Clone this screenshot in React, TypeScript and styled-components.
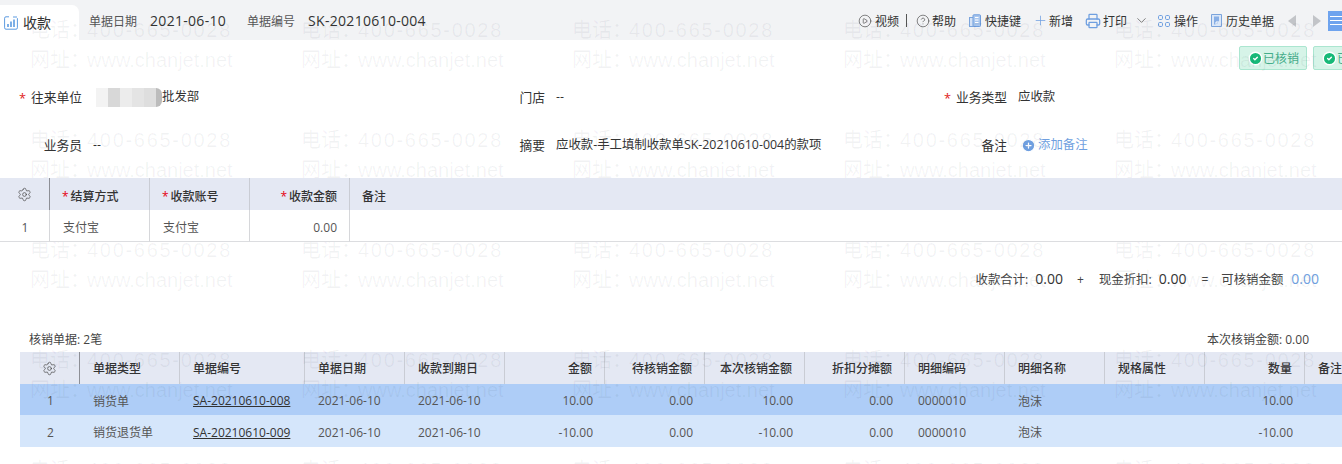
import React from "react";
import styled, { createGlobalStyle } from "styled-components";
import { CirclePlay, CircleHelp, Plus, Printer, ChevronDown, Settings, CircleCheck, CirclePlus } from "lucide-react";

const FONT = `"Open Sans", "Noto Sans CJK SC", "Noto Sans", sans-serif`;

const Global = createGlobalStyle`
  html, body { margin: 0; padding: 0; background: #fff; }
  body { font-family: ${FONT}; font-size: 12px; color: #333; }
  * { box-sizing: border-box; }
`;

const Page = styled.div`
  position: relative;
  width: 1342px;
  height: 464px;
  overflow: hidden;
  background: #fff;
`;

const Watermark = styled.div`
  position: absolute;
  inset: 0;
  z-index: 1;
  padding-left: 30px;
  display: grid;
  grid-template-columns: repeat(5, 271px);
  grid-auto-rows: 110px;
  pointer-events: none;
`;

const MarkTile = styled.div`
  padding-top: 15px;
  font-family: "Liberation Sans", "Noto Sans CJK SC", sans-serif;
  font-size: 20px;
  line-height: 30px;
  color: rgba(40, 50, 70, 0.06);
  white-space: nowrap;
`;

const MarkLine = styled.div`
  display: flex;
`;

const MarkKey = styled.span`
  width: 57px;
`;

const MarkDigits = styled.span`
  letter-spacing: 1.7px;
`;

const Header = styled.header`
  height: 40px;
  background: #f2f3f5;
  display: flex;
  align-items: flex-end;
`;

const Tab = styled.div`
  width: 79px;
  height: 35px;
  background: #fff;
  border-top-right-radius: 7px;
  display: flex;
  align-items: center;
  padding-left: 4px;
  gap: 5px;
  font-size: 14px;
  line-height: 20px;
  color: #333;
`;

const Meta = styled.div`
  height: 40px;
  display: flex;
  align-items: center;
  margin-left: 10px;
  padding-top: 1px;
  white-space: nowrap;
`;

const MetaLabel = styled.span`
  font-size: 12px;
  color: #555;
  margin-right: 13px;
`;

const MetaValue = styled.span`
  font-size: 14px;
  letter-spacing: 0.3px;
  color: #333;
  margin-right: 21px;
`;

const Toolbar = styled.div`
  height: 40px;
  margin-left: auto;
  display: flex;
  align-items: center;
  padding-top: 1px;
  white-space: nowrap;
`;

const Tool = styled.span<{ $gap?: number; $after?: number }>`
  display: inline-flex;
  align-items: center;
  gap: ${(p) => p.$gap ?? 4}px;
  margin-right: ${(p) => p.$after ?? 13}px;
  font-size: 12px;
  color: #333;
  svg { flex: none; }
`;

const ToolDivider = styled.span`
  width: 1px;
  height: 13px;
  background: #555;
  margin-right: 9px;
`;

const MenuButton = styled.span`
  width: 14px;
  height: 20px;
  margin-left: 7px;
  background: #6ea3ee;
  display: inline-flex;
  flex-direction: column;
  justify-content: center;
  gap: 3px;
  padding-left: 2px;
`;

const MenuLine = styled.span`
  display: block;
  width: 14px;
  height: 1px;
  background: #fff;
`;

const StatusRow = styled.div`
  height: 33px;
  padding: 6px 0 0 1239px;
  display: flex;
  gap: 6px;
  white-space: nowrap;
`;

const StatusTag = styled.span`
  flex: none;
  width: 68px;
  height: 24px;
  display: inline-flex;
  align-items: center;
  padding-left: 8px;
  background: #d6f4e8;
  border: 1px solid #abe6d0;
  border-radius: 2px;
  font-size: 12px;
  color: #46ae8b;
`;

const FormRow = styled.div`
  display: grid;
  grid-template-columns: 463px 462px 417px;
  height: 48px;
  align-items: center;
`;

const Field = styled.div`
  display: flex;
  align-items: center;
  white-space: nowrap;
  font-size: 12.4px;
  line-height: 18px;
`;

const FieldLabel = styled.span`
  width: 82px;
  font-size: 12.75px;
  text-align: right;
  color: #333;
  margin-right: 11px;
  position: relative;
`;

const Star = styled.i`
  position: absolute;
  font-style: normal;
  color: #e02020;
  right: 56px;
  top: 1px;
`;

const Redacted = styled.span`
  display: inline-block;
  width: 66px;
  height: 19px;
  margin-left: 3px;
  border-radius: 0 6px 6px 0;
  background: linear-gradient(
    90deg,
    #f3f3f3 0 12px,
    #d8d8d8 12px 24px,
    #ececec 24px 36px,
    #e4e4e4 36px 48px,
    #dedede 48px 60px,
    #bcbcbc 60px 66px
  );
`;

const Link = styled.span`
  display: inline-flex;
  align-items: center;
  gap: 2px;
  color: #6f9fe0;
  margin-left: 3px;
`;

const Spacer = styled.div`
  height: 9px;
`;

const Table = styled.table<{ $over?: boolean; $width: number }>`
  display: table;
  width: ${(p) => p.$width}px;
  border-collapse: separate;
  border-spacing: 0;
  table-layout: fixed;
  position: relative;
  z-index: ${(p) => (p.$over ? 2 : 0)};
  font-size: 12px;
`;

const SalesWrap = styled.div`
  padding-left: 20px;
`;

const HeadCell = styled.th<{ $right?: boolean; $dark?: boolean; $drop?: number }>`
  height: 32px;
  padding: ${(p) => p.$drop ?? 0}px 12px 0 ${(p) => (p.$drop ? 12 : 13)}px;
  background: #e4e8f3;
  font-weight: 500;
  color: #333;
  text-align: ${(p) => (p.$right ? "right" : "left")};
  border-right: 1px solid ${(p) => (p.$dark ? "#8d8f96" : "#c9ccd4")};
  white-space: nowrap;
  overflow: hidden;
  &:last-child { border-right: 0; }
`;

const GearCell = styled(HeadCell)`
  padding: 0;
  svg { display: block; margin: 0 auto; }
`;

const Req = styled.span`
  color: #e6000f;
  margin-right: 2px;
`;

const Row = styled.tr<{ $bg?: string; $h: number }>`
  height: ${(p) => p.$h}px;
  background: ${(p) => p.$bg ?? "#fff"};
`;

const Cell = styled.td<{ $right?: boolean; $center?: boolean }>`
  padding: 3px 12px 0 13px;
  color: #555;
  text-align: ${(p) => (p.$right ? "right" : p.$center ? "center" : "left")};
  border-bottom: 1px solid #dcdde0;
  white-space: nowrap;
  overflow: hidden;
`;

const LinedCell = styled(Cell)`
  border-right: 1px solid #d6d7da;
`;

const SalesCell = styled(Cell)`
  border-bottom-color: transparent;
`;

const DocLink = styled.span`
  color: #333;
  text-decoration: underline;
`;

const Summary = styled.div`
  height: 76px;
  padding: 28px 23px 0 0;
  display: flex;
  justify-content: flex-end;
  align-items: flex-start;
  line-height: 20px;
  white-space: nowrap;
`;

const SumLabel = styled.span`
  font-size: 12.4px;
  color: #444;
`;

const SumValue = styled.span<{ $blue?: boolean; $left: number; $right: number }>`
  font-size: 14px;
  margin: -1px ${(p) => p.$right}px 0 ${(p) => p.$left}px;
  color: ${(p) => (p.$blue ? "#6f9fe0" : "#333")};
`;

const SumOp = styled.span<{ $right: number }>`
  font-size: 12px;
  color: #444;
  margin-right: ${(p) => p.$right}px;
`;

const SalesMeta = styled.div`
  height: 34px;
  padding: 13px 33px 0 29px;
  display: flex;
  justify-content: space-between;
  font-size: 12px;
  line-height: 18px;
  color: #444;
`;

const TabIcon = () => (
  <svg width="14" height="14" viewBox="0 0 14 14" fill="none" stroke="#5d9be0" strokeWidth="1">
    <path d="M5 .8H2A1.4 1.4 0 0 0 .6 2.2v9.6A1.4 1.4 0 0 0 2 13.2h10a1.4 1.4 0 0 0 1.4-1.4V2.2" />
    <path d="M4 11V8M7 11V5.5M10 11V3.5" strokeWidth="1.6" />
    <path d="M9 1h4" />
  </svg>
);

const ShortcutIcon = () => (
  <svg width="12" height="14" viewBox="0 0 12 14" fill="none">
    <rect x="0.5" y="3.5" width="4.5" height="9" fill="#d4e2f6" stroke="#7ba4dc" />
    <rect x="4" y="0.8" width="7.5" height="11.7" rx="0.8" fill="#a9c6ee" stroke="#6e9ddd" />
    <path d="M6 3.5h3.5M6 6h3.5M6 8.5h3.5" stroke="#fff" />
  </svg>
);

const OpsIcon = () => (
  <svg width="12" height="12" viewBox="0 0 12 12" fill="none" stroke="#6f9fe0" strokeWidth="1">
    <rect x="0.5" y="0.5" width="4" height="4" rx="1.2" />
    <rect x="7.5" y="0.5" width="4" height="4" rx="1.2" />
    <rect x="0.5" y="7.5" width="4" height="4" rx="1.2" />
    <rect x="7.5" y="7.5" width="4" height="4" rx="1.2" />
  </svg>
);

const HistoryIcon = () => (
  <svg width="11" height="13" viewBox="0 0 11 13" fill="none">
    <path d="M.5.5h10v12H.5z" fill="#dbe7f8" stroke="#7ba4dc" />
    <path d="M3 2.5h5v5.5l-3 2.5H3z" fill="#88afe6" />
    <path d="M5 10.5V8h3" stroke="#fff" />
  </svg>
);

const ArrowIcon = styled.svg<{ $after: number }>`
  margin-right: ${(p) => p.$after}px;
`;

const Arrow = ({ dir, after }: { dir: "l" | "r"; after: number }) => (
  <ArrowIcon $after={after} width="8" height="12" viewBox="0 0 8 12">
    <path d={dir === "l" ? "M8 0v12L0 6z" : "M0 0v12l8-6z"} fill="#c2c4c8" />
  </ArrowIcon>
);

const paymentCols = [50, 100, 100, 100, 992];
const salesCols = [60, 100, 125, 100, 100, 100, 100, 100, 100, 100, 100, 100, 100, 37];
const salesHead: [string, boolean][] = [
  ["单据类型", false], ["单据编号", false], ["单据日期", false], ["收款到期日", false],
  ["金额", true], ["待核销金额", true], ["本次核销金额", true], ["折扣分摊额", true],
  ["明细编码", false], ["明细名称", false], ["规格属性", false], ["数量", true], ["备注", false],
];
const salesRows = [
  { n: "1", type: "销货单", no: "SA-20210610-008", amt: "10.00", cur: "10.00", qty: "10.00", bg: "#aecdf7", h: 31 },
  { n: "2", type: "销货退货单", no: "SA-20210610-009", amt: "-10.00", cur: "-10.00", qty: "-10.00", bg: "#d5e6fb", h: 32 },
];

export default function App() {
  return (
    <Page>
      <Global />
      <Watermark aria-hidden>
        {Array.from({ length: 25 }, (_, i) => (
          <MarkTile key={i}>
            <MarkLine><MarkKey>电话：</MarkKey><MarkDigits>400-665-0028</MarkDigits></MarkLine>
            <MarkLine><MarkKey>网址：</MarkKey>www.chanjet.net</MarkLine>
          </MarkTile>
        ))}
      </Watermark>

      <Header>
        <Tab>
          <TabIcon />
          收款
        </Tab>
        <Meta>
          <MetaLabel>单据日期</MetaLabel>
          <MetaValue>2021-06-10</MetaValue>
          <MetaLabel>单据编号</MetaLabel>
          <MetaValue>SK-20210610-004</MetaValue>
        </Meta>
        <Toolbar>
          <Tool $gap={3} $after={7}><CirclePlay size={14} strokeWidth={1.1} color="#444" />视频</Tool>
          <ToolDivider />
          <Tool $gap={2} $after={13}><CircleHelp size={14} strokeWidth={1.1} color="#444" />帮助</Tool>
          <Tool $after={12}><ShortcutIcon />快捷键</Tool>
          <Tool $gap={1} $after={12}><Plus size={15} strokeWidth={1.2} color="#6f9fe0" />新增</Tool>
          <Tool $gap={2} $after={7}><Printer size={16} strokeWidth={1.9} color="#6f9fe0" />打印</Tool>
          <Tool $after={9}><ChevronDown size={15} strokeWidth={1.2} color="#555" /></Tool>
          <Tool $after={13}><OpsIcon />操作</Tool>
          <Tool $after={14}><HistoryIcon />历史单据</Tool>
          <Arrow dir="l" after={17} />
          <Arrow dir="r" after={0} />
          <MenuButton><MenuLine /><MenuLine /><MenuLine /></MenuButton>
        </Toolbar>
      </Header>

      <StatusRow>
        <StatusTag><CircleCheck size={15} fill="#17b978" color="#fff" strokeWidth={2.2} />已核销</StatusTag>
        <StatusTag><CircleCheck size={15} fill="#17b978" color="#fff" strokeWidth={2.2} />已核销</StatusTag>
      </StatusRow>

      <FormRow>
        <Field>
          <FieldLabel><Star>*</Star>往来单位</FieldLabel>
          <Redacted />批发部
        </Field>
        <Field><FieldLabel>门店</FieldLabel>--</Field>
        <Field><FieldLabel><Star>*</Star>业务类型</FieldLabel>应收款</Field>
      </FormRow>
      <FormRow>
        <Field><FieldLabel>业务员</FieldLabel>--</Field>
        <Field><FieldLabel>摘要</FieldLabel>应收款-手工填制收款单SK-20210610-004的款项</Field>
        <Field>
          <FieldLabel>备注</FieldLabel>
          <Link><CirclePlus size={15} fill="#6f9fe0" color="#fff" strokeWidth={2} />添加备注</Link>
        </Field>
      </FormRow>

      <Spacer />

      <Table $over $width={1342}>
        <colgroup>
          {paymentCols.map((w, i) => <col key={i} width={w} />)}
        </colgroup>
        <thead>
          <tr>
            <GearCell $dark><Settings size={15} strokeWidth={1.1} color="#444" /></GearCell>
            <HeadCell $drop={4}><Req>*</Req>结算方式</HeadCell>
            <HeadCell $drop={4}><Req>*</Req>收款账号</HeadCell>
            <HeadCell $drop={4} $right><Req>*</Req>收款金额</HeadCell>
            <HeadCell $drop={4}>备注</HeadCell>
          </tr>
        </thead>
        <tbody>
          <Row $h={32}>
            <LinedCell $center>1</LinedCell>
            <LinedCell>支付宝</LinedCell>
            <LinedCell>支付宝</LinedCell>
            <LinedCell $right>0.00</LinedCell>
            <Cell />
          </Row>
        </tbody>
      </Table>

      <Summary>
        <SumLabel>收款合计:</SumLabel><SumValue $left={7} $right={14}>0.00</SumValue>
        <SumOp $right={15}>+</SumOp>
        <SumLabel>现金折扣:</SumLabel><SumValue $left={7} $right={15}>0.00</SumValue>
        <SumOp $right={13}>=</SumOp>
        <SumLabel>可核销金额</SumLabel><SumValue $blue $left={8} $right={0}>0.00</SumValue>
      </Summary>

      <SalesMeta>
        <span>核销单据: 2笔</span>
        <span>本次核销金额: 0.00</span>
      </SalesMeta>

      <SalesWrap>
        <Table $width={1322}>
          <colgroup>
            {salesCols.map((w, i) => <col key={i} width={w} />)}
          </colgroup>
          <thead>
            <tr>
              <GearCell $dark><Settings size={15} strokeWidth={1.1} color="#444" /></GearCell>
              {salesHead.map(([t, r]) => <HeadCell key={t} $right={r}>{t}</HeadCell>)}
            </tr>
          </thead>
          <tbody>
            {salesRows.map((r) => (
              <Row key={r.n} $h={r.h} $bg={r.bg}>
                <SalesCell $center>{r.n}</SalesCell>
                <SalesCell>{r.type}</SalesCell>
                <SalesCell><DocLink>{r.no}</DocLink></SalesCell>
                <SalesCell>2021-06-10</SalesCell>
                <SalesCell>2021-06-10</SalesCell>
                <SalesCell $right>{r.amt}</SalesCell>
                <SalesCell $right>0.00</SalesCell>
                <SalesCell $right>{r.cur}</SalesCell>
                <SalesCell $right>0.00</SalesCell>
                <SalesCell>0000010</SalesCell>
                <SalesCell>泡沫</SalesCell>
                <SalesCell />
                <SalesCell $right>{r.qty}</SalesCell>
                <SalesCell />
              </Row>
            ))}
          </tbody>
        </Table>
      </SalesWrap>
    </Page>
  );
}
